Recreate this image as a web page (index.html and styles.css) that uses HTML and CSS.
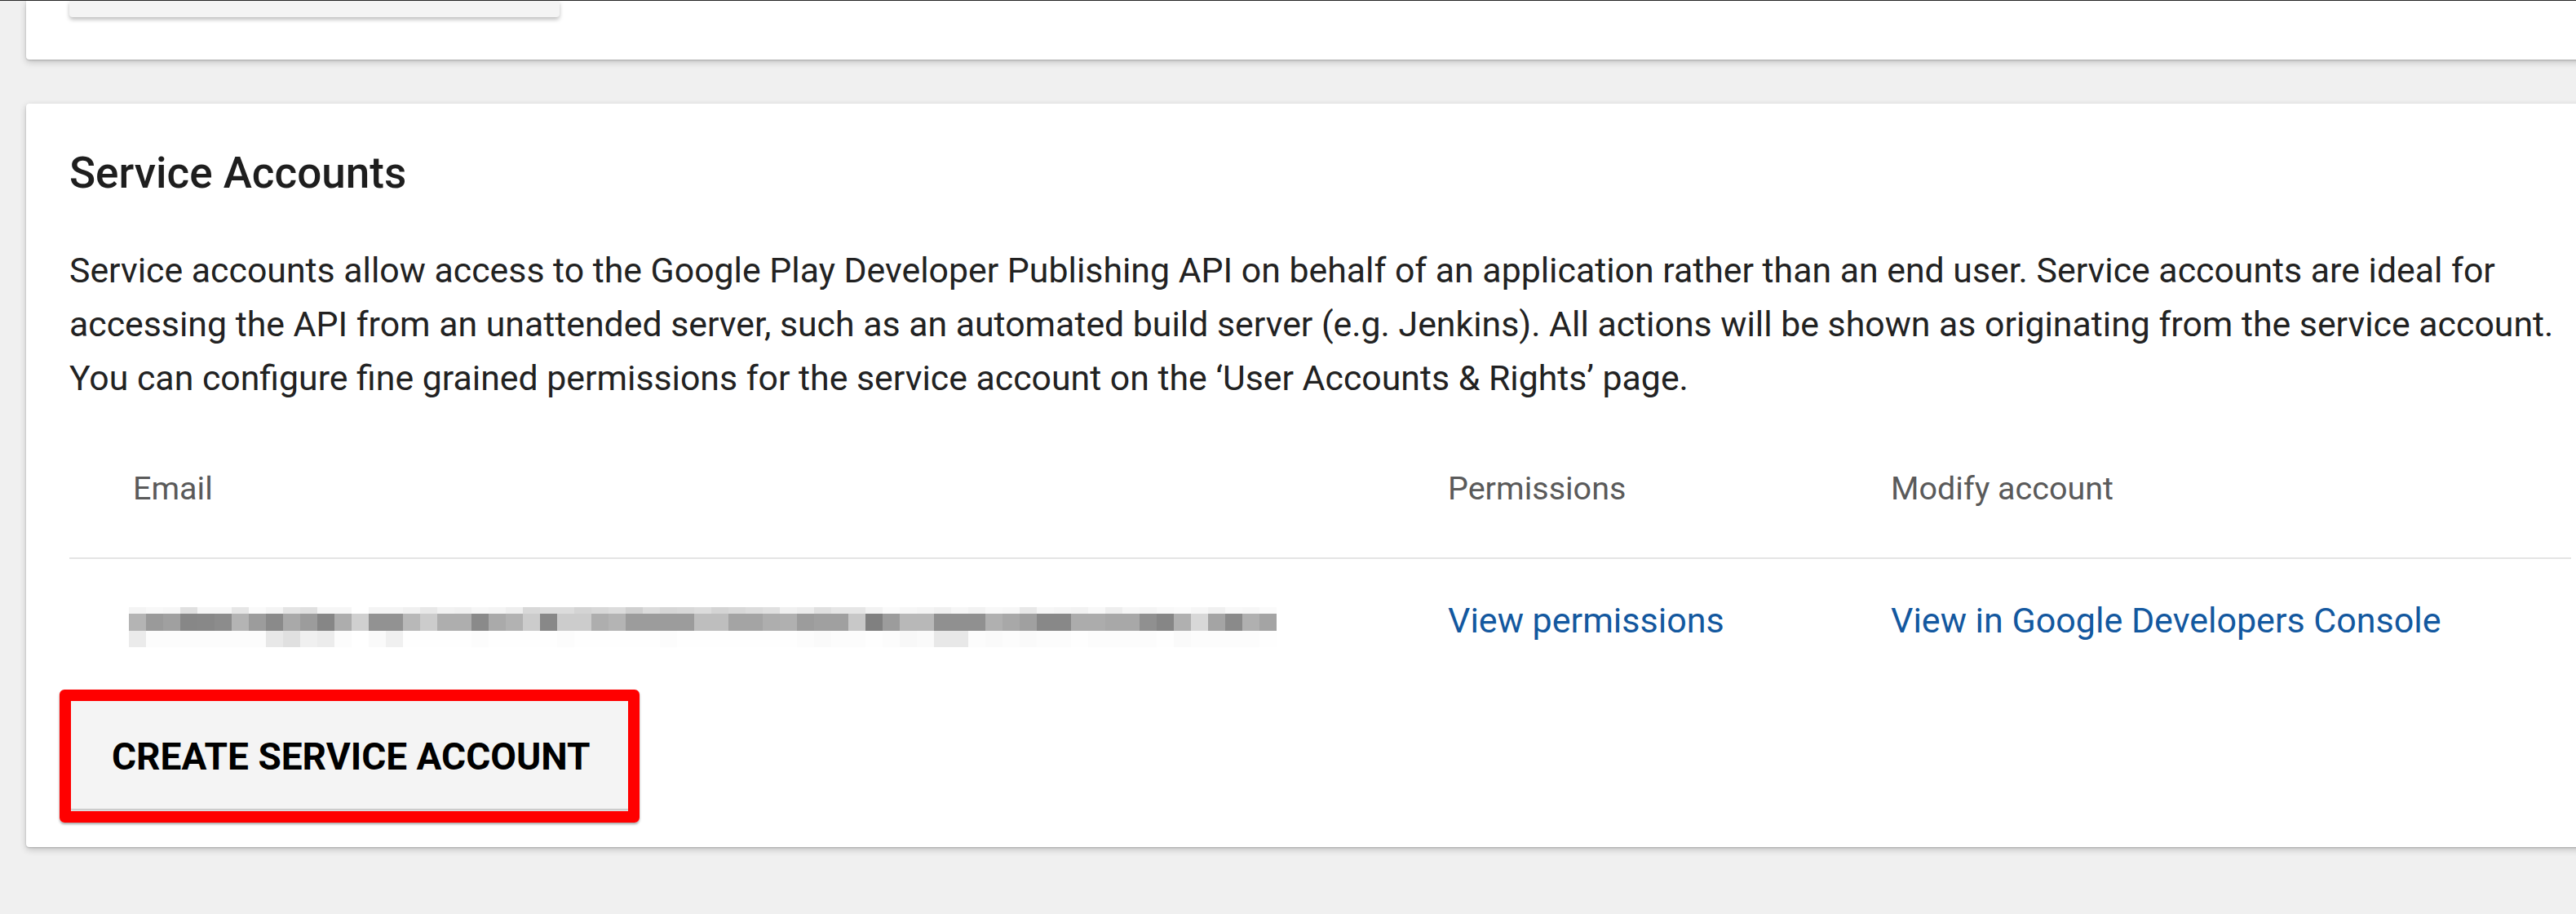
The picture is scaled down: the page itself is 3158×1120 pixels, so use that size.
FILE: index.html
```html
<!DOCTYPE html>
<html lang="en">
<head>
<meta charset="utf-8">
<title>Service Accounts</title>
<link rel="stylesheet" href="styles.css">
</head>
<body>
<div class="topline"></div>
<div class="page">
  <section class="card card-prev">
    <div class="prev-btn"></div>
  </section>
  <section class="card card-main">
    <h2 class="title">Service Accounts</h2>
    <p class="desc">Service accounts allow access to the Google Play Developer Publishing API on behalf of an application rather than an end user. Service accounts are ideal for accessing the API from an unattended server, such as an automated build server (e.g. Jenkins). All actions will be shown as originating from the service account. You can configure fine grained permissions for the service account on the ‘User Accounts &amp; Rights’ page.</p>
    <div class="table">
      <div class="th th-email">Email</div>
      <div class="th">Permissions</div>
      <div class="th">Modify account</div>
      <div class="td td-email"><div class="blur" id="blur"></div></div>
      <div class="td"><a class="link" href="#">View permissions</a></div>
      <div class="td"><a class="link" href="#">View in Google Developers Console</a></div>
    </div>
    <div class="btn-wrap">
      <button class="btn" type="button">CREATE SERVICE ACCOUNT</button>
      <span class="annot"></span>
    </div>
  </section>
</div>
<script src="script.js"></script>
</body>
</html>
```
FILE: styles.css
```css
html, body {
  margin: 0;
  padding: 0;
}
body {
  background: #f0f0f0;
  overflow: hidden;
  width: 3158px;
  height: 1120px;
  font-family: Roboto, "Noto Sans", "Liberation Sans", sans-serif;
  color: #222;
}
.topline {
  height: 1px;
  background: #2a2a2a;
}
.page {
  padding-left: 32px;
  display: flex;
  flex-direction: column;
}
.card {
  background: #fff;
  width: 3173px;
  box-sizing: border-box;
  padding: 0 53px;
  border-radius: 4px;
  box-shadow: 0 3px 8px rgba(0,0,0,0.2), 0 1px 2px rgba(0,0,0,0.18);
}
.card-prev {
  height: 72px;
  border-radius: 0 0 4px 4px;
}
.prev-btn {
  width: 601px;
  height: 20px;
  background: #f4f4f4;
  border-radius: 0 0 4px 4px;
  box-shadow: 0 3px 5px rgba(0,0,0,0.25);
}
.card-main {
  margin-top: 54px;
  height: 911px;
  padding-top: 55px;
}
.title {
  margin: 0;
  font-size: 53px;
  line-height: 60px;
  font-weight: 500;
  color: #1e1e1e;
}
.desc {
  margin: 56px 0 0 0;
  font-size: 42.8px;
  line-height: 66px;
  color: #222;
}
.table {
  display: grid;
  grid-template-columns: 1690px 543px 1fr;
}
.th {
  font-size: 39.5px;
  line-height: 50px;
  color: #5a5a5a;
  padding: 78px 0 59px 0;
  border-bottom: 2px solid #e4e4e4;
}
.th-email {
  padding-left: 78px;
}
.td {
  font-size: 43px;
  line-height: 50px;
  padding-top: 50px;
  height: 50px;
}
.td-email {
  padding-left: 73px;
}
.link {
  color: #13589f;
  text-decoration: none;
}
.blur {
  margin-top: 9px;
  display: grid;
  grid-template-columns: repeat(67, 21px);
  grid-template-rows: 8px 21px 20px;
}
.btn-wrap {
  position: relative;
  margin-top: 72px;
  width: 688px;
}
.btn {
  display: block;
  width: 688px;
  box-sizing: border-box;
  border: 0;
  margin: 0;
  padding: 42px 0 36px 52px;
  text-align: left;
  background: #f4f4f4;
  border-radius: 3px;
  box-shadow: 0 2px 4px rgba(0,0,0,0.3);
  font-family: Roboto, "Noto Sans", "Liberation Sans", sans-serif;
  font-size: 46px;
  line-height: 56px;
  font-weight: 700;
  color: #000;
}
.annot {
  position: absolute;
  top: -12px;
  left: -12px;
  right: -11px;
  bottom: -17px;
  border: 14px solid #ff0000;
  border-radius: 6px;
  box-shadow: 0 2px 3px rgba(0,0,0,0.35);
  pointer-events: none;
}
```
FILE: script.js
```js
(function () {
  var top = ["f4","f8","f6","e0","f6","f6","e6","fa","f4","e4","e0","f6","f6","ff","f4","f4","f0","e8","f2","f0","f6","f4","ee","d8","dc","dc","d4","d8","dc","d0","dc","d6","d8","dc","d4","d8","dc","e0","f0","ec","e0","e6","e6","f2","fa","f6","f4","f0","f6","f2","f8","f6","e8","f6","f4","f2","f8","ee","f6","f4","f8","fa","f6","f0","f8","f6","fa"];
  var mid = ["b4","9a","a0","87","88","8c","b4","9c","8a","a9","9c","86","ad","d0","92","92","b8","cc","ae","ae","8a","aa","b2","cc","88","cc","cc","ae","b4","9c","9c","9c","9c","be","be","a4","a4","ae","b0","9c","a0","a0","c8","80","9c","b8","b8","90","90","90","b0","a8","a0","88","88","ac","ac","a8","a8","90","86","b0","d8","a4","8a","b0","a4"];
  var bot = ["eb","fc","fc","fc","fc","fc","fc","fc","e8","e0","f0","ec","fc","ff","fa","f0","fe","fe","fe","fe","fc","fe","fe","fe","fe","fc","fe","fe","fe","fe","fe","fc","fe","fe","fe","fe","fe","fe","fe","fc","fa","fc","fc","fe","fc","f8","fa","e8","e8","fc","fa","fc","fa","fc","fc","fe","fc","fc","fc","fc","fe","fa","fc","fc","fc","fc","fe"];
  var el = document.getElementById("blur");
  [top, mid, bot].forEach(function (row) {
    row.forEach(function (v) {
      var d = document.createElement("div");
      d.style.background = "#" + v + v + v;
      el.appendChild(d);
    });
  });
})();
```
